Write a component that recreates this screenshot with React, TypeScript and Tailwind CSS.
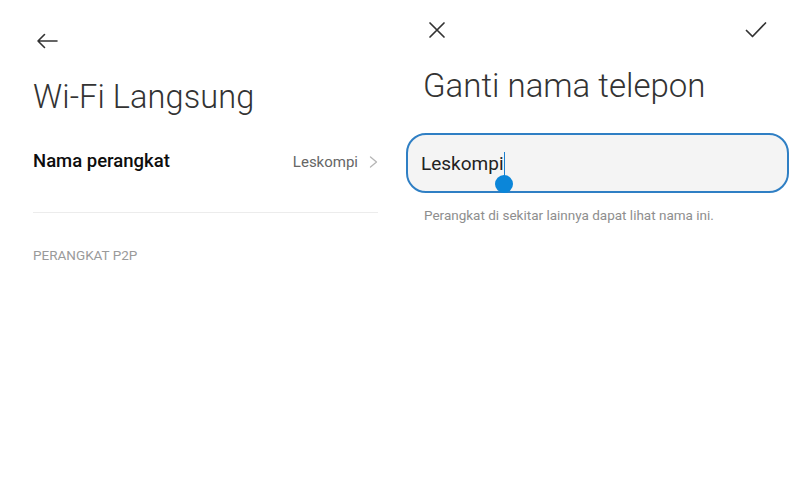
import React from 'react';

/* ─────────────── ICONS ─────────────── */
const BackArrow = () => (
  <svg width="22" height="16" viewBox="0 0 22 16" fill="none" stroke="#333" strokeWidth="1.6" strokeLinecap="round" strokeLinejoin="round">
    <path d="M21 8H2M8.5 1.5 2 8l6.5 6.5" />
  </svg>
);

const CloseIcon = () => (
  <svg width="18" height="18" viewBox="0 0 18 18" fill="none" stroke="#333" strokeWidth="1.7" strokeLinecap="round">
    <path d="M2 2l14 14M16 2 2 16" />
  </svg>
);

const CheckIcon = () => (
  <svg width="22" height="18" viewBox="0 0 22 18" fill="none" stroke="#333" strokeWidth="1.7" strokeLinecap="round" strokeLinejoin="round">
    <path d="M1.5 9.5 7.5 15.5 20.5 2" />
  </svg>
);

const Chevron = () => (
  <svg width="9" height="12" viewBox="0 0 9 12" fill="none" stroke="#b5b5b5" strokeWidth="1.3" strokeLinecap="round" strokeLinejoin="round">
    <path d="M1.5 1 7.5 6 1.5 11" />
  </svg>
);

/* ─────────────── LEFT: WI-FI DIRECT ─────────────── */
const WifiDirect = () => (
  <section className="w-[400px] flex flex-col pl-[33px] pr-[22px]">
    <div className="h-[34px] mt-[24px] flex items-center pl-[3px]">
      <BackArrow />
    </div>
    <h1 className="mt-[19px] text-[32.5px] font-light text-[#333] leading-[40px] tracking-[0.1px]">
      Wi-Fi Langsung
    </h1>
    <div className="mt-[27px] h-[36px] flex items-center">
      <span className="flex-1 text-[18.5px] font-medium text-[#0d0d0d]">Nama perangkat</span>
      <span className="text-[15px] text-[#666]">Leskompi</span>
      <span className="ml-[11px] flex items-center"><Chevron /></span>
    </div>
    <div className="mt-[32px] h-px bg-[#ececec]" />
    <p className="mt-[34px] text-[13.5px] text-[#9a9a9a] leading-[16px]">PERANGKAT P2P</p>
  </section>
);

/* ─────────────── RIGHT: RENAME ─────────────── */
const RenamePhone = () => (
  <section className="w-[400px] flex flex-col pl-[6px] pr-[11px]">
    <div className="h-[30px] mt-[15px] flex items-center justify-between pl-[22px] pr-[22px]">
      <CloseIcon />
      <CheckIcon />
    </div>
    <h1 className="mt-[21px] pl-[17px] text-[33px] font-light text-[#333] leading-[40px]">
      Ganti nama telepon
    </h1>
    <div className="relative mt-[27px] h-[60px] rounded-[20px] border-2 border-[#2f7fc4] bg-[#f4f4f4] flex items-center pl-[13px]">
      <span className="text-[19px] text-[#222] pt-[2px]">Leskompi</span>
      <span className="w-px h-[32px] bg-[#1a7fd0] mt-[10px]" />
      <span className="absolute left-[87px] top-[40px] w-[18px] h-[18px] rounded-full bg-[#0b86d9]" />
    </div>
    <p className="mt-[13px] pl-[18px] text-[13.5px] text-[#8e8e8e] leading-[18px]">
      Perangkat di sekitar lainnya dapat lihat nama ini.
    </p>
  </section>
);

export default function App() {
  return (
    <div className="w-[800px] h-[500px] bg-white flex font-['Roboto',sans-serif] overflow-hidden">
      <WifiDirect />
      <RenamePhone />
    </div>
  );
}
